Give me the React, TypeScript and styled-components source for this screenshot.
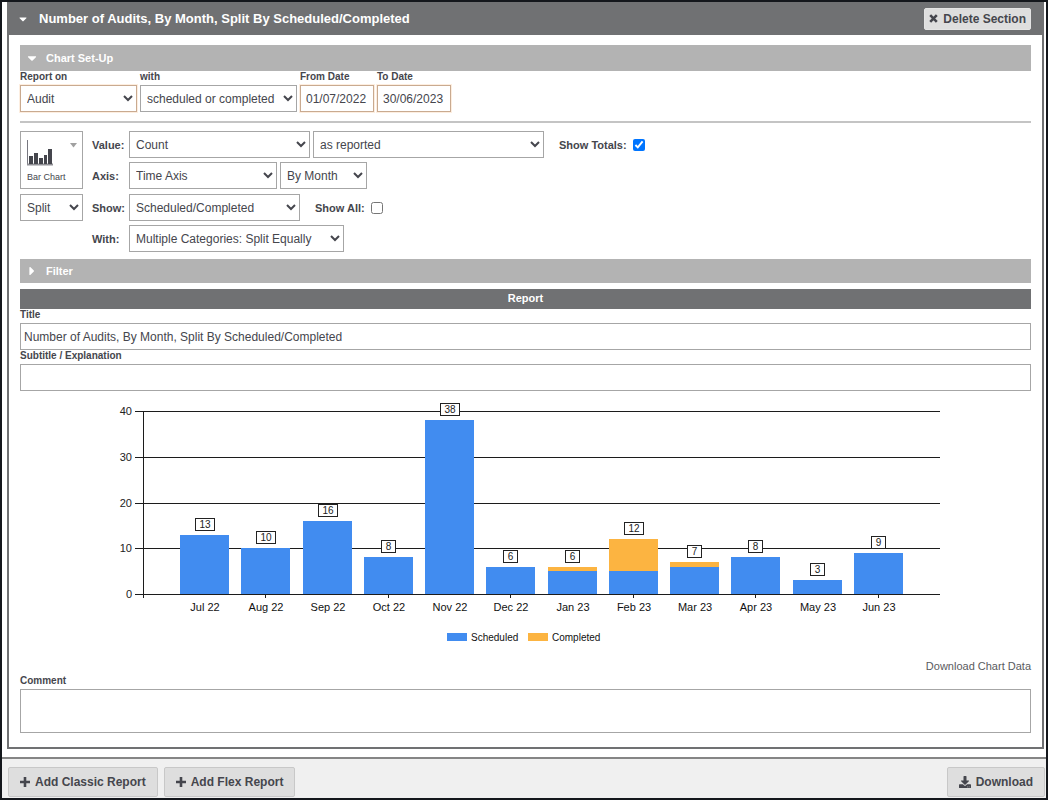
import React, { useState } from "react";
import styled, { createGlobalStyle } from "styled-components";
import { FaCaretDown, FaCaretRight, FaDownload } from "react-icons/fa";

const GlobalStyle = createGlobalStyle`
  * { box-sizing: border-box; }
  body {
    margin: 0;
    background: #fff;
    color: #45464d;
    font: 12px "Liberation Sans", Arial, sans-serif;
  }
  button, input, select, textarea { font: inherit; color: inherit; }
`;

const Page = styled.div`
  display: flex;
  flex-direction: column;
  min-height: 100vh;
  border: 2px solid #14171c;
`;

const Section = styled.section`
  flex: 1;
  display: flex;
  flex-direction: column;
  margin: 0 2px 8px 5px;
  border: 2px solid #707173;
  border-top: 0;
`;

const SectionHeader = styled.header`
  display: flex;
  align-items: center;
  height: 33px;
  padding: 0 11px 0 8px;
  background: #707173;
  color: #fff;
`;

const SectionTitle = styled.h1`
  flex: 1;
  margin: 0;
  font-size: 13px;
  font-weight: bold;
`;

const Toggle = styled.button<{ $width: number }>`
  display: flex;
  align-items: center;
  width: ${(p) => p.$width}px;
  height: 20px;
  padding: 0;
  border: 0;
  background: none;
  color: #fff;
  cursor: pointer;
`;

const Button = styled.button<{ $large?: boolean }>`
  display: flex;
  align-items: center;
  justify-content: center;
  gap: 5px;
  height: ${(p) => (p.$large ? 30 : 22)}px;
  padding: 0 ${(p) => (p.$large ? 11 : 4)}px;
  border: 1px solid ${(p) => (p.$large ? "#c8c8c8" : "#e4e4e4")};
  border-radius: 2px;
  background: #dedede;
  color: #45464d;
  font-weight: bold;
  white-space: nowrap;
  cursor: pointer;
`;

const SectionBody = styled.div`
  flex: 1;
  display: flex;
  flex-direction: column;
  padding: 10px 11px 14px;
`;

const PanelBar = styled.div<{ $height: number }>`
  display: flex;
  align-items: center;
  height: ${(p) => p.$height}px;
  padding: 0 0 1px 5px;
  background: #b3b3b3;
`;

const PanelTitle = styled.h2`
  margin: 0;
  color: #fff;
  font-size: 11px;
  font-weight: bold;
`;

const ReportBar = styled.div`
  display: flex;
  align-items: center;
  justify-content: center;
  height: 20px;
  margin-top: 6px;
  padding-bottom: 2px;
  background: #707173;
`;

const FieldRow = styled.div`
  display: flex;
  gap: 3px;
  padding-bottom: 9px;
  border-bottom: 2px solid #c4c4c4;
`;

const Field = styled.div`
  display: flex;
  flex-direction: column;
`;

const FieldLabel = styled.label`
  height: 14px;
  font-size: 10px;
  font-weight: bold;
  line-height: 12px;
`;

const Select = styled.select<{ $width: number; $required?: boolean }>`
  width: ${(p) => p.$width}px;
  height: 27px;
  padding: 0 0 0 2px;
  border: 1px solid ${(p) => (p.$required ? "#c9aa90" : "#a6a6a6")};
  border-radius: 0;
  box-shadow: ${(p) => (p.$required ? "0 0 0 1px #fdeee0" : "none")};
  background: #fff;
`;

const DateInput = styled.input`
  width: 74px;
  height: 27px;
  padding: 0 5px;
  border: 1px solid #c9aa90;
  box-shadow: 0 0 0 1px #fdeee0;
`;

const TextInput = styled.input`
  width: 100%;
  height: 27px;
  padding: 0 3px;
  border: 1px solid #a6a6a6;
  background: #fff;
`;

const Comment = styled.textarea`
  display: block;
  width: 100%;
  height: 44px;
  padding: 3px;
  border: 1px solid #a6a6a6;
  resize: none;
`;

const Setup = styled.div`
  display: flex;
  flex-direction: column;
  gap: 5px;
  padding: 8px 0 7px;
`;

const SetupGroup = styled.div`
  display: grid;
  grid-template-columns: 63px 1fr;
  column-gap: 9px;
  align-items: start;
`;

const SetupRows = styled.div`
  display: flex;
  flex-direction: column;
  gap: 4px;
`;

const SetupRow = styled.div`
  display: flex;
  align-items: center;
  gap: 3px;
`;

const RowLabel = styled.label`
  width: 34px;
  font-size: 11px;
  font-weight: bold;
`;

const CheckLabel = styled.label`
  display: flex;
  align-items: center;
  gap: 6px;
  margin-left: 12px;
  font-size: 11px;
  font-weight: bold;
`;

const CheckBox = styled.input`
  width: 12px;
  height: 12px;
  margin: 0;
`;

const ChartType = styled.button`
  display: grid;
  grid-template-columns: 1fr auto;
  height: 58px;
  padding: 8px 5px 5px 6px;
  border: 1px solid #a6a6a6;
  background: #fff;
  font-size: 9px;
  text-align: left;
  cursor: pointer;
`;

const ChartTypeName = styled.span`
  grid-column: 1 / -1;
  align-self: end;
  line-height: 12px;
`;

const ChartFigure = styled.figure`
  display: flex;
  justify-content: center;
  margin: 9px 0 8px;
`;

const ChartSvg = styled.svg`
  display: block;
  width: 851px;
  height: 250px;
  font-size: 11px;
`;

const DownloadLink = styled.a`
  align-self: flex-end;
  margin-bottom: 1px;
  color: #5a5b60;
  font-size: 11px;
  line-height: 16px;
  text-decoration: none;
`;

const Footer = styled.footer`
  display: flex;
  align-items: flex-start;
  gap: 6px;
  height: 41px;
  padding: 8px 1px 0 6px;
  border-top: 2px solid #858585;
  background: #f0f0f0;
`;

const Spacer = styled.div`
  flex: 1;
`;

type Month = { label: string; scheduled: number; completed: number };

const months: Month[] = [
  { label: "Jul 22", scheduled: 13, completed: 0 },
  { label: "Aug 22", scheduled: 10, completed: 0 },
  { label: "Sep 22", scheduled: 16, completed: 0 },
  { label: "Oct 22", scheduled: 8, completed: 0 },
  { label: "Nov 22", scheduled: 38, completed: 0 },
  { label: "Dec 22", scheduled: 6, completed: 0 },
  { label: "Jan 23", scheduled: 5, completed: 1 },
  { label: "Feb 23", scheduled: 5, completed: 7 },
  { label: "Mar 23", scheduled: 6, completed: 1 },
  { label: "Apr 23", scheduled: 8, completed: 0 },
  { label: "May 23", scheduled: 3, completed: 0 },
  { label: "Jun 23", scheduled: 9, completed: 0 },
];

const BLUE = "#418cf0";
const AMBER = "#fcb441";
const PLOT = { left: 43, right: 839, top: 11, bottom: 194 };
const BAR_WIDTH = 49;

const yOf = (value: number) =>
  Math.round(PLOT.bottom - (value / 40) * (PLOT.bottom - PLOT.top));
const xOf = (index: number) =>
  Math.round(PLOT.left + ((index + 1) * (PLOT.right - PLOT.left)) / (months.length + 1));

function AuditChart() {
  return (
    <ChartFigure>
      <ChartSvg viewBox="0 0 851 250" role="img" aria-label="Audits by month">
        {[0, 10, 20, 30, 40].map((v) => (
          <g key={v}>
            <rect x={PLOT.left - 8} y={yOf(v)} width={PLOT.right - PLOT.left + 9} height={1} fill="#1c1c1c" />
            <text x={PLOT.left - 11} y={yOf(v) + 4} textAnchor="end" fill="#222">
              {v}
            </text>
          </g>
        ))}
        <rect x={PLOT.left} y={PLOT.top} width={1} height={PLOT.bottom - PLOT.top + 4} fill="#1c1c1c" />
        {months.map((m, i) => {
          const total = m.scheduled + m.completed;
          const x = xOf(i);
          const left = x - 24;
          const boxWidth = total > 9 ? 19 : 14;
          const boxX = x - Math.floor(boxWidth / 2);
          return (
            <g key={m.label}>
              <rect x={left} y={yOf(m.scheduled)} width={BAR_WIDTH} height={PLOT.bottom - yOf(m.scheduled)} fill={BLUE} />
              <rect x={left} y={yOf(total)} width={BAR_WIDTH} height={yOf(m.scheduled) - yOf(total)} fill={AMBER} />
              {i % 2 === 1 && <rect x={x} y={PLOT.bottom} width={1} height={4} fill="#1c1c1c" />}
              <rect x={boxX + 0.5} y={yOf(total) - 16.5} width={boxWidth} height={12} fill="#fff" stroke="#222" />
              <text x={boxX + boxWidth / 2 + 0.5} y={yOf(total) - 7} textAnchor="middle" fontSize={10} fill="#222">
                {total}
              </text>
              <text x={x + 1} y={211} textAnchor="middle" fill="#111">
                {m.label}
              </text>
            </g>
          );
        })}
        <rect x={347} y={233} width={20} height={8} fill={BLUE} />
        <text x={371} y={241} fontSize={10} fill="#111">Scheduled</text>
        <rect x={428} y={233} width={20} height={8} fill={AMBER} />
        <text x={452} y={241} fontSize={10} fill="#111">Completed</text>
      </ChartSvg>
    </ChartFigure>
  );
}

function BarChartIcon() {
  return (
    <svg width="26" height="26" viewBox="0 0 26 26" aria-hidden="true">
      <path d="M0.5 0V25" fill="none" stroke="#77777f" />
      <path d="M0 24.5H26" fill="none" stroke="#8f8f94" strokeWidth="2" />
      <path d="M2 16h4v8H2zM7 13h4v11H7zM12 18h4v6h-4zM17 15h3v9h-3zM21 9h4v15h-4z" fill="#45464d" />
    </svg>
  );
}

function MenuArrow() {
  return (
    <svg width="7" height="8" viewBox="0 0 7 8" aria-hidden="true">
      <path d="M0 3H7L3.5 7.5z" fill="#a0a0a0" />
    </svg>
  );
}

function CrossIcon() {
  return (
    <svg width="9" height="9" viewBox="0 0 9 9" aria-hidden="true">
      <path d="M1.2 1.2L7.8 7.8M7.8 1.2L1.2 7.8" stroke="currentColor" strokeWidth="2.6" />
    </svg>
  );
}

function PlusIcon() {
  return (
    <svg width="10" height="10" viewBox="0 0 10 10" aria-hidden="true">
      <path d="M5 0V10M0 5H10" stroke="currentColor" strokeWidth="2.6" />
    </svg>
  );
}

export default function App() {
  const [title, setTitle] = useState("Number of Audits, By Month, Split By Scheduled/Completed");
  return (
    <>
      <GlobalStyle />
      <Page>
        <Section>
          <SectionHeader>
            <Toggle type="button" $width={22} aria-label="Collapse section">
              <FaCaretDown size={12} />
            </Toggle>
            <SectionTitle>Number of Audits, By Month, Split By Scheduled/Completed</SectionTitle>
            <Button type="button">
              <CrossIcon />
              Delete Section
            </Button>
          </SectionHeader>
          <SectionBody>
            <PanelBar $height={26}>
              <Toggle type="button" $width={21} aria-label="Collapse chart set-up">
                <FaCaretDown size={14} />
              </Toggle>
              <PanelTitle>Chart Set-Up</PanelTitle>
            </PanelBar>
            <FieldRow>
              <Field>
                <FieldLabel htmlFor="report-on">Report on</FieldLabel>
                <Select id="report-on" $width={117} $required>
                  <option>Audit</option>
                </Select>
              </Field>
              <Field>
                <FieldLabel htmlFor="state">with</FieldLabel>
                <Select id="state" $width={157}>
                  <option>scheduled or completed</option>
                </Select>
              </Field>
              <Field>
                <FieldLabel htmlFor="from">From Date</FieldLabel>
                <DateInput id="from" defaultValue="01/07/2022" />
              </Field>
              <Field>
                <FieldLabel htmlFor="to">To Date</FieldLabel>
                <DateInput id="to" defaultValue="30/06/2023" />
              </Field>
            </FieldRow>
            <Setup>
              <SetupGroup>
                <ChartType type="button">
                  <BarChartIcon />
                  <MenuArrow />
                  <ChartTypeName>Bar Chart</ChartTypeName>
                </ChartType>
                <SetupRows>
                  <SetupRow>
                    <RowLabel htmlFor="value">Value:</RowLabel>
                    <Select id="value" $width={181}>
                      <option>Count</option>
                    </Select>
                    <Select $width={231} aria-label="Value basis">
                      <option>as reported</option>
                    </Select>
                    <CheckLabel>
                      Show Totals:
                      <CheckBox type="checkbox" defaultChecked />
                    </CheckLabel>
                  </SetupRow>
                  <SetupRow>
                    <RowLabel htmlFor="axis">Axis:</RowLabel>
                    <Select id="axis" $width={148}>
                      <option>Time Axis</option>
                    </Select>
                    <Select $width={87} aria-label="Axis interval">
                      <option>By Month</option>
                    </Select>
                  </SetupRow>
                </SetupRows>
              </SetupGroup>
              <SetupGroup>
                <Select $width={63} aria-label="Series mode">
                  <option>Split</option>
                </Select>
                <SetupRows>
                  <SetupRow>
                    <RowLabel htmlFor="show">Show:</RowLabel>
                    <Select id="show" $width={171}>
                      <option>Scheduled/Completed</option>
                    </Select>
                    <CheckLabel>
                      Show All:
                      <CheckBox type="checkbox" />
                    </CheckLabel>
                  </SetupRow>
                  <SetupRow>
                    <RowLabel htmlFor="categories">With:</RowLabel>
                    <Select id="categories" $width={215}>
                      <option>Multiple Categories: Split Equally</option>
                    </Select>
                  </SetupRow>
                </SetupRows>
              </SetupGroup>
            </Setup>
            <PanelBar $height={24}>
              <Toggle type="button" $width={21} aria-label="Expand filter">
                <FaCaretRight size={14} />
              </Toggle>
              <PanelTitle>Filter</PanelTitle>
            </PanelBar>
            <ReportBar>
              <PanelTitle>Report</PanelTitle>
            </ReportBar>
            <FieldLabel htmlFor="title">Title</FieldLabel>
            <TextInput id="title" value={title} onChange={(e) => setTitle(e.target.value)} />
            <FieldLabel htmlFor="subtitle">Subtitle / Explanation</FieldLabel>
            <TextInput id="subtitle" />
            <AuditChart />
            <DownloadLink href="#chart-data">Download Chart Data</DownloadLink>
            <FieldLabel htmlFor="comment">Comment</FieldLabel>
            <Comment id="comment" />
          </SectionBody>
        </Section>
        <Footer>
          <Button type="button" $large>
            <PlusIcon />
            Add Classic Report
          </Button>
          <Button type="button" $large>
            <PlusIcon />
            Add Flex Report
          </Button>
          <Spacer />
          <Button type="button" $large>
            <FaDownload size={12} />
            Download
          </Button>
        </Footer>
      </Page>
    </>
  );
}
